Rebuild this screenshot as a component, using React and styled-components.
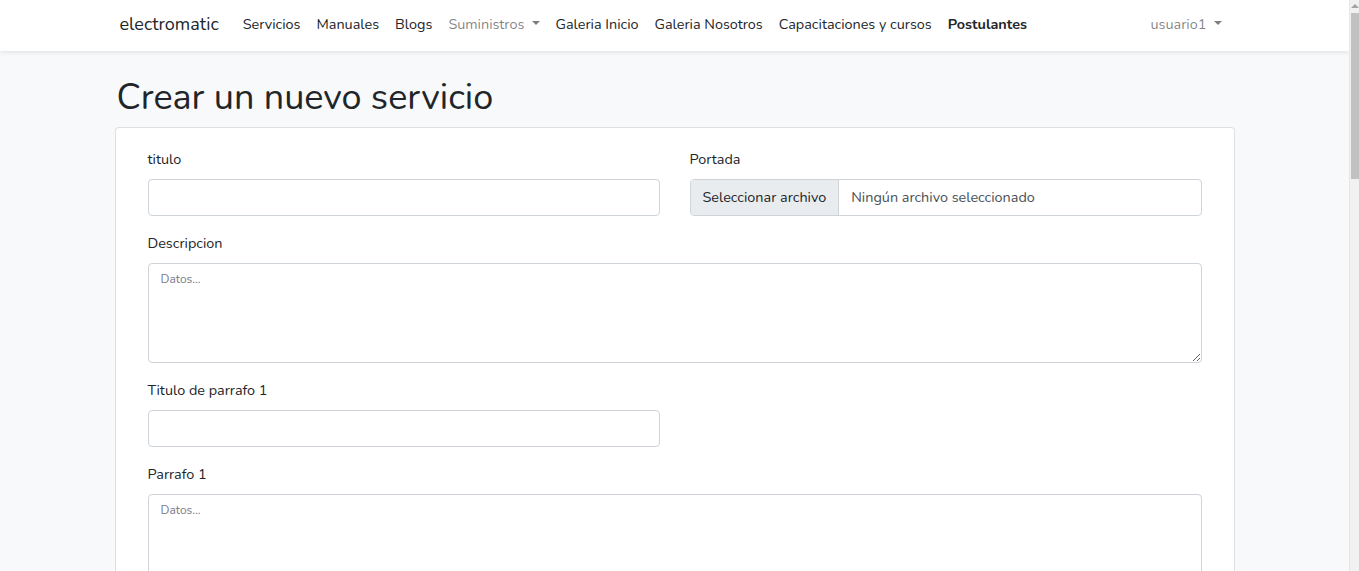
import React from "react";
import styled, { createGlobalStyle, css } from "styled-components";

const GlobalStyle = createGlobalStyle`
  * {
    box-sizing: border-box;
  }
  body {
    margin: 0;
    padding-right: 10px;
    background: #f8f9fa;
    color: #212529;
    font-family: "Nunito", "Lato", "Noto Sans", sans-serif;
    font-size: 14.4px;
    line-height: 1.6;
  }
`;

const ScrollTrack = styled.div`
  position: fixed;
  top: 0;
  right: 0;
  width: 10px;
  height: 100vh;
  background: #f1f1f1;
  border-left: 1px solid #e6e6e6;
`;

const ScrollArrow = styled.div`
  margin: 4px 0 0 1px;
  width: 0;
  height: 0;
  border-left: 4px solid transparent;
  border-right: 4px solid transparent;
  border-bottom: 4px solid #a3a3a3;
`;

const ScrollThumb = styled.div`
  margin: 5px 0 0 1px;
  width: 8px;
  height: 166px;
  background: #c1c1c1;
`;

const Navbar = styled.nav`
  background: #fff;
  box-shadow: 0 2px 4px rgba(0, 0, 0, 0.075);
`;

const NavInner = styled.div`
  max-width: 1140px;
  margin: 0 auto;
  padding: 0 15px 2px;
  height: 51px;
  display: flex;
  align-items: center;
`;

const Brand = styled.a`
  font-size: 18px;
  color: #212529;
  margin-right: 16px;
  text-decoration: none;
`;

const NavList = styled.ul`
  display: flex;
  align-items: center;
  list-style: none;
  margin: 0;
  padding: 0;
  ${(p) =>
    p.$right &&
    css`
      margin-left: auto;
    `}
`;

const NavLink = styled.a`
  display: block;
  padding: 0 8px;
  text-decoration: none;
  color: ${(p) => (p.$muted ? "rgba(0, 0, 0, 0.5)" : "#212529")};
  font-weight: ${(p) => (p.$active ? 700 : 400)};
  ${(p) =>
    p.$dropdown &&
    css`
      &::after {
        content: "";
        display: inline-block;
        margin-left: 0.5em;
        vertical-align: 0.255em;
        border-top: 0.3em solid;
        border-right: 0.3em solid transparent;
        border-left: 0.3em solid transparent;
        border-bottom: 0;
      }
    `}
`;

const Main = styled.main`
  padding: 25px 0 24px;
`;

const Container = styled.div`
  max-width: 1140px;
  margin: 0 auto;
  padding: 0 10px;
`;

const Title = styled.h1`
  margin: 0 0 8px;
  padding-left: 2px;
  font-size: 36px;
  font-weight: 400;
  line-height: 1.2;
`;

const Card = styled.div`
  background: #fff;
  border: 1px solid rgba(0, 0, 0, 0.125);
  border-radius: 4px;
  padding: 20px 32px;
`;

const FormGrid = styled.form`
  display: grid;
  grid-template-columns: 1fr 1fr;
  column-gap: 30px;
`;

const FormGroup = styled.div`
  margin-bottom: 16px;
  grid-column: ${(p) => (p.$full ? "1 / -1" : "auto")};
  ${(p) =>
    p.$startRow &&
    css`
      grid-column: 1;
    `}
`;

const Label = styled.label`
  display: inline-block;
  margin-bottom: 8px;
`;

const fieldBase = css`
  display: block;
  width: 100%;
  padding: 6px 12px;
  font: inherit;
  color: #495057;
  background: #fff;
  border: 1px solid #ced4da;
  border-radius: 4px;
  outline: none;
`;

const Input = styled.input`
  ${fieldBase}
  height: 37px;
`;

const TextArea = styled.textarea`
  ${fieldBase}
  height: 100px;
  resize: vertical;
  &::placeholder {
    color: #7b7a85;
    font-size: 12px;
  }
`;

const FileField = styled.label`
  display: flex;
  align-items: stretch;
  height: 37px;
  border: 1px solid #ced4da;
  border-radius: 4px;
  overflow: hidden;
  background: #fff;
  color: #495057;
`;

const FileButton = styled.span`
  display: flex;
  align-items: center;
  padding: 0 12px;
  background: #e9ecef;
  border-right: 1px solid #ced4da;
  color: #212529;
`;

const FileName = styled.span`
  display: flex;
  align-items: center;
  padding: 0 12px;
`;

const SubmitButton = styled.button`
  justify-self: start;
  font: inherit;
  padding: 6px 12px;
  color: #fff;
  background: #3490dc;
  border: 1px solid #3490dc;
  border-radius: 4px;
`;

const links = [
  { label: "Servicios" },
  { label: "Manuales" },
  { label: "Blogs" },
  { label: "Suministros", muted: true, dropdown: true },
  { label: "Galeria Inicio" },
  { label: "Galeria Nosotros" },
  { label: "Capacitaciones y cursos" },
  { label: "Postulantes", active: true },
];

const paragraphs = [1, 2, 3, 4, 5, 6];

export default function App() {
  return (
    <>
      <GlobalStyle />
      <Navbar>
        <NavInner>
          <Brand href="#">electromatic</Brand>
          <NavList>
            {links.map((l) => (
              <li key={l.label}>
                <NavLink
                  href="#"
                  $muted={l.muted}
                  $dropdown={l.dropdown}
                  $active={l.active}
                >
                  {l.label}
                </NavLink>
              </li>
            ))}
          </NavList>
          <NavList $right>
            <li>
              <NavLink href="#" $muted $dropdown>
                usuario1
              </NavLink>
            </li>
          </NavList>
        </NavInner>
      </Navbar>
      <Main>
        <Container>
          <Title>Crear un nuevo servicio</Title>
          <Card>
            <FormGrid onSubmit={(e) => e.preventDefault()}>
              <FormGroup>
                <Label htmlFor="titulo">titulo</Label>
                <Input id="titulo" type="text" />
              </FormGroup>
              <FormGroup>
                <Label>Portada</Label>
                <FileField>
                  <FileButton>Seleccionar archivo</FileButton>
                  <FileName>Ningún archivo seleccionado</FileName>
                </FileField>
              </FormGroup>
              <FormGroup $full>
                <Label htmlFor="descripcion">Descripcion</Label>
                <TextArea id="descripcion" placeholder="Datos..." />
              </FormGroup>
              {paragraphs.map((n) => (
                <React.Fragment key={n}>
                  <FormGroup $startRow>
                    <Label htmlFor={`titulo${n}`}>Titulo de parrafo {n}</Label>
                    <Input id={`titulo${n}`} type="text" />
                  </FormGroup>
                  <FormGroup $full>
                    <Label htmlFor={`parrafo${n}`}>Parrafo {n}</Label>
                    <TextArea id={`parrafo${n}`} placeholder="Datos..." />
                  </FormGroup>
                </React.Fragment>
              ))}
              <SubmitButton type="submit">Guardar</SubmitButton>
            </FormGrid>
          </Card>
        </Container>
      </Main>
      <ScrollTrack>
        <ScrollArrow />
        <ScrollThumb />
      </ScrollTrack>
    </>
  );
}
